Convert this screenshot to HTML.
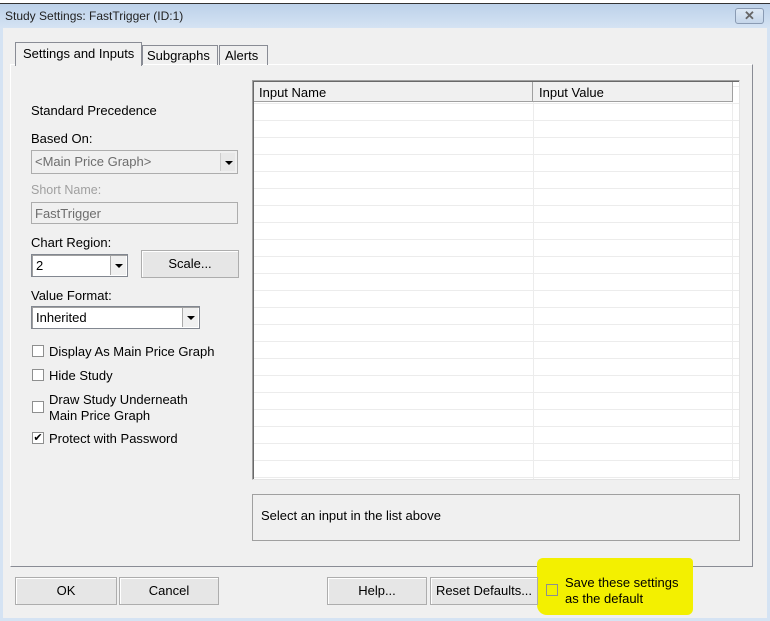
<!DOCTYPE html>
<html><head><style>
*{margin:0;padding:0;box-sizing:border-box}
body{width:770px;height:621px;overflow:hidden;background:#f0f0f0;font-family:"Liberation Sans",sans-serif;font-size:13px;color:#000;position:relative}
.a{position:absolute}
.btn{position:absolute;background:#e6e6e6;border:1px solid #adadad;box-shadow:inset 1px 1px 0 #fff;text-align:center;line-height:26px}
.cb{position:absolute;width:12px;height:12px;border:1px solid #8e8f8f;background:#fff}
.sel{position:absolute;background:#fff;border:1px solid #828790;box-shadow:inset 1px 1px 0 #a0a0a0}
.arr{position:absolute;right:1px;top:1px;bottom:1px;width:16px;background:#f0f0f0;border-left:1px solid #aaa}
.arr:after{content:"";position:absolute;left:4px;top:8px;border-left:4px solid transparent;border-right:4px solid transparent;border-top:4px solid #000}
</style></head><body>
<div class="a" style="left:0;top:0;width:770px;height:4px;background:#fff;border-bottom:1px solid #333"></div>
<div class="a" style="left:0;top:4px;width:770px;height:24px;background:linear-gradient(#bcd1e9,#d5e3f3)"></div>
<div class="a" style="left:5px;top:9px;font-size:12px;color:#222">Study Settings: FastTrigger (ID:1)</div>
<div class="a" style="left:735px;top:8px;width:29px;height:16px;border:1px solid #8a9bb3;border-radius:3px;background:linear-gradient(#dde8f4,#c5d6ea);text-align:center;font-size:13px;font-weight:bold;line-height:14px;color:#666">✕</div>
<div class="a" style="left:0;top:28px;width:3px;height:593px;background:#d5e3f3"></div>
<div class="a" style="left:767px;top:28px;width:3px;height:593px;background:#d5e3f3"></div>
<div class="a" style="left:0;top:618px;width:770px;height:3px;background:#d5e3f3"></div>
<div class="a" style="left:10px;top:64px;width:743px;height:503px;border:1px solid #898c95;border-top-color:#fff;border-left-color:#fff;background:#f0f0f0"></div>
<div class="a" style="left:15px;top:42px;width:127px;height:24px;border:1px solid #898c95;border-bottom:none;background:#f0f0f0;padding:3px 0 0 7px">Settings and Inputs</div>
<div class="a" style="left:142px;top:45px;width:76px;height:20px;border:1px solid #898c95;border-bottom:none;padding:2px 0 0 4px">Subgraphs</div>
<div class="a" style="left:219px;top:45px;width:49px;height:20px;border:1px solid #898c95;border-bottom:none;padding:2px 0 0 5px">Alerts</div>
<div class="a" style="left:31px;top:103px">Standard Precedence</div>
<div class="a" style="left:31px;top:131px">Based On:</div>
<div class="a" style="left:31px;top:150px;width:207px;height:24px;border:1px solid #adadad;background:#f0f0f0;color:#6d6d6d;padding:3px 0 0 3px">&lt;Main Price Graph&gt;<div class="arr" style="border-left:1px solid #ccc;right:2px;top:2px;bottom:2px;width:15px;background:#e8e8e8"></div></div>
<div class="a" style="left:31px;top:183px;color:#a0a0a0;font-size:12.5px">Short Name:</div>
<div class="a" style="left:31px;top:202px;width:207px;height:22px;border:1px solid #adadad;color:#6d6d6d;padding:3px 0 0 3px">FastTrigger</div>
<div class="a" style="left:31px;top:235px">Chart Region:</div>
<div class="sel" style="left:31px;top:254px;width:97px;height:23px;padding:3px 0 0 4px">2<div class="arr"></div></div>
<div class="btn" style="left:141px;top:250px;width:98px;height:28px">Scale...</div>
<div class="a" style="left:31px;top:288px">Value Format:</div>
<div class="sel" style="left:31px;top:306px;width:169px;height:23px;padding:3px 0 0 4px">Inherited<div class="arr"></div></div>
<div class="cb" style="left:32px;top:345px"></div><div class="a" style="left:49px;top:344px">Display As Main Price Graph</div>
<div class="cb" style="left:32px;top:369px"></div><div class="a" style="left:49px;top:368px">Hide Study</div>
<div class="cb" style="left:32px;top:401px"></div><div class="a" style="left:49px;top:392px;line-height:16px">Draw Study Underneath<br>Main Price Graph</div>
<div class="cb" style="left:32px;top:432px;font-size:11px;line-height:10px;text-align:center">✔</div><div class="a" style="left:49px;top:431px">Protect with Password</div>
<div class="a" style="left:252px;top:80px;width:488px;height:400px;border:1px solid #a0a0a0;border-right-color:#e3e3e3;border-bottom-color:#e3e3e3;background:#fff;box-shadow:inset 1px 1px 0 #696969;
background-image:repeating-linear-gradient(#fff 0,#fff 16px,#ececec 16px,#ececec 17px);background-position:0 23px;background-size:100% 17px;overflow:hidden">
<div class="a" style="left:1px;top:1px;width:479px;height:20px;background:#f0f0f0;border-bottom:1px solid #a0a0a0"></div>
<div class="a" style="left:6px;top:4px">Input Name</div>
<div class="a" style="left:279px;top:1px;width:1px;height:20px;background:#a0a0a0"></div>
<div class="a" style="left:479px;top:1px;width:1px;height:20px;background:#a0a0a0"></div>
<div class="a" style="left:286px;top:4px">Input Value</div>
<div class="a" style="left:280px;top:21px;width:1px;height:380px;background:#ececec"></div>
<div class="a" style="left:479px;top:21px;width:1px;height:380px;background:#ececec"></div>
</div>
<div class="a" style="left:252px;top:494px;width:488px;height:47px;border:1px solid #a0a0a0;padding:13px 0 0 8px">Select an input in the list above</div>
<div class="a" style="left:537px;top:558px;width:156px;height:57px;background:#f3f000;border-radius:6px 4px 6px 10px"></div>
<div class="btn" style="left:15px;top:577px;width:102px;height:28px">OK</div>
<div class="btn" style="left:119px;top:577px;width:100px;height:28px">Cancel</div>
<div class="btn" style="left:327px;top:577px;width:100px;height:28px">Help...</div>
<div class="btn" style="left:430px;top:577px;width:108px;height:28px">Reset Defaults...</div>
<div class="a" style="left:546px;top:584px;width:12px;height:12px;border:1px solid #8e8f8f;background:#f3f000"></div>
<div class="a" style="left:565px;top:575px;line-height:16px">Save these settings<br>as the default</div>
</body></html>
